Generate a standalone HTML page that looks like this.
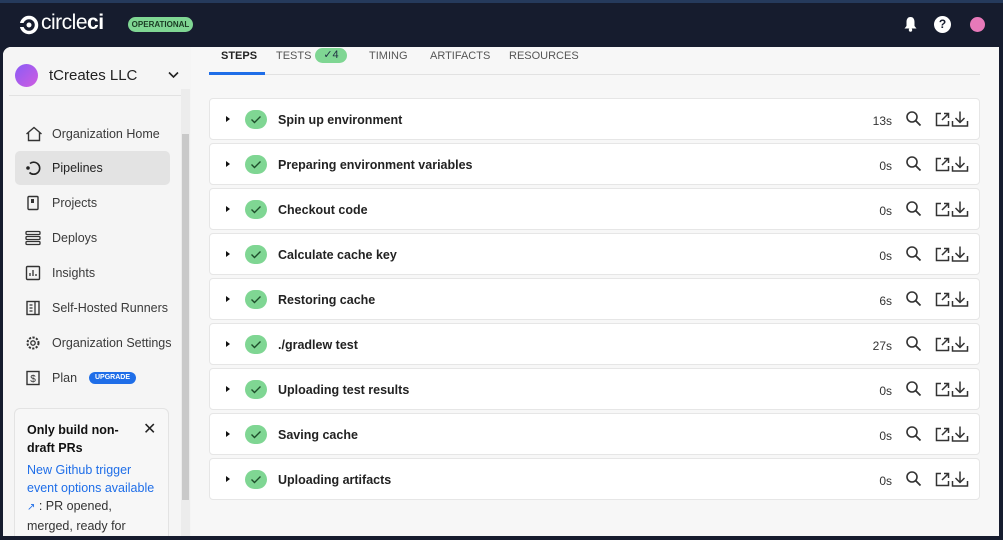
<html><head><style>
*{box-sizing:border-box;margin:0;padding:0}
body{width:1003px;height:540px;overflow:hidden;background:#161c2e;font-family:"Liberation Sans",sans-serif;position:relative}
.top{position:absolute;left:0;top:0;width:1003px;height:3px;background:#253a5c}
.panel{position:absolute;left:3px;top:47px;width:996px;height:489px;background:#f7f7f7;border-radius:8px 0 0 0;overflow:hidden}
.side{position:absolute;left:0;top:0;width:188px;height:489px;background:#f5f5f5}
.sb{position:absolute;left:178px;top:42px;width:9px;height:447px;background:#ececec}
.sb div{position:absolute;left:1px;top:45px;width:7px;height:366px;background:#c9c9c9}
.nav{position:absolute;left:12px;width:155px;height:34px;font-size:12.5px;color:#3a3a3a;display:flex;align-items:center;white-space:nowrap}
.nav svg{position:absolute;left:10px}
.nav span{position:absolute;left:37px}
.row{position:absolute;left:206px;width:771px;height:42px;background:#fff;border:1px solid #e6e6e6;border-radius:4px}
.row .tri{position:absolute;left:16px;top:17px;width:0;height:0;border-left:4px solid #111;border-top:3.5px solid transparent;border-bottom:3.5px solid transparent}
.row .ok{position:absolute;left:35px;top:11px;width:22px;height:19px;border-radius:10px;background:#7fd693}
.row .nm{position:absolute;left:68px;top:14px;font-size:12.5px;font-weight:bold;color:#222}
.row .t{position:absolute;right:87px;top:15px;font-size:12px;color:#333}
.row svg.i{position:absolute;top:11px}
</style></head><body>
<div class="top"></div>
<svg style="position:absolute;left:19px;top:15px" width="20" height="20" viewBox="0 0 20 20"><circle cx="10" cy="10" r="7.5" fill="none" stroke="#fff" stroke-width="3.5"/><circle cx="10" cy="10" r="2.5" fill="#fff"/><rect x="0" y="8" width="5" height="4" fill="#161c2e"/></svg>
<div style="position:absolute;left:41px;top:11px;color:#fff;font-size:21px;letter-spacing:-0.5px">circle<b>ci</b></div>
<div style="position:absolute;left:128px;top:17px;width:65px;height:15px;border-radius:8px;background:#7fd693;color:#1a3a23;font-size:8px;font-weight:bold;text-align:center;line-height:15px">OPERATIONAL</div>
<svg style="position:absolute;left:903px;top:16px" width="15" height="16" viewBox="0 0 15 16"><path d="M7.5 1C4.5 1 3.5 3.5 3.5 6V10L1.5 12.5H13.5L11.5 10V6C11.5 3.5 10.5 1 7.5 1Z" fill="#fff"/><circle cx="7.5" cy="14" r="1.7" fill="#fff"/></svg>
<div style="position:absolute;left:934px;top:16px;width:17px;height:17px;border-radius:50%;background:#fff;color:#161c2e;font-size:12px;font-weight:bold;text-align:center;line-height:17px">?</div>
<div style="position:absolute;left:970px;top:17px;width:15px;height:15px;border-radius:50%;background:#e779b9"></div>
<div class="panel">
<div class="side">
<div style="position:absolute;left:12px;top:17px;width:23px;height:23px;border-radius:50%;background:linear-gradient(135deg,#8a5cf6,#d05ce0)"></div>
<div style="position:absolute;left:46px;top:20px;font-size:15px;color:#222">tCreates LLC</div>
<svg style="position:absolute;left:165px;top:24px" width="11" height="8"><path d="M1 1.5L5.5 6L10 1.5" fill="none" stroke="#222" stroke-width="1.6"/></svg>
<div style="position:absolute;left:6px;top:48px;width:180px;height:1px;background:#e2e2e2"></div>
<div class="nav" style="top:70px"><svg width="18" height="16"><path d="M1.5 8L9 1.5L16.5 8M3.5 6.5V14.5H14.5V6.5" fill="none" stroke="#333" stroke-width="1.4"/></svg><span>Organization Home</span></div>
<div class="nav" style="top:104px;background:#e3e3e3;border-radius:5px;color:#222"><svg width="16" height="16"><path d="M5 3.5A6 6 0 1 1 4.5 12.5" fill="none" stroke="#222" stroke-width="1.6"/><circle cx="3" cy="8" r="1.8" fill="#222"/></svg><span>Pipelines</span></div>
<div class="nav" style="top:139px"><svg width="16" height="16"><rect x="3" y="1.5" width="10" height="13" rx="1" fill="none" stroke="#333" stroke-width="1.4"/><rect x="6" y="4" width="3" height="4" fill="#333"/></svg><span>Projects</span></div>
<div class="nav" style="top:174px"><svg width="16" height="16"><rect x="1" y="1.5" width="14" height="3" rx="1" fill="none" stroke="#333" stroke-width="1.3"/><rect x="1" y="6.5" width="14" height="3" rx="1" fill="none" stroke="#333" stroke-width="1.3"/><rect x="1" y="11.5" width="14" height="3" rx="1" fill="none" stroke="#333" stroke-width="1.3"/></svg><span>Deploys</span></div>
<div class="nav" style="top:209px"><svg width="16" height="16"><rect x="1.5" y="1.5" width="13" height="13" rx="1" fill="none" stroke="#333" stroke-width="1.4"/><path d="M5 11V8M8 11V5M11 11V9" stroke="#333" stroke-width="1.3"/></svg><span>Insights</span></div>
<div class="nav" style="top:244px"><svg width="16" height="16"><rect x="2" y="1.5" width="12" height="13" fill="none" stroke="#333" stroke-width="1.4"/><path d="M10 1.5V14.5M4.5 5H7.5M4.5 8H7.5M4.5 11H7.5" stroke="#333" stroke-width="1.3"/></svg><span>Self-Hosted Runners</span></div>
<div class="nav" style="top:279px"><svg width="16" height="16"><circle cx="8" cy="8" r="5.5" fill="none" stroke="#333" stroke-width="2" stroke-dasharray="2.2 1.4"/><circle cx="8" cy="8" r="2.2" fill="none" stroke="#333" stroke-width="1.3"/></svg><span>Organization Settings</span></div>
<div class="nav" style="top:314px"><svg width="16" height="16"><rect x="2" y="1.5" width="12" height="13" fill="none" stroke="#333" stroke-width="1.4"/><text x="8" y="12" font-size="10" text-anchor="middle" fill="#333" font-family="Liberation Sans">$</text></svg><span>Plan</span><div style="position:absolute;left:74px;top:11px;width:47px;height:12px;border-radius:6px;background:#1f6ee8;color:#fff;font-size:7px;font-weight:bold;text-align:center;line-height:12px">UPGRADE</div></div>
<div style="position:absolute;left:11px;top:361px;width:155px;height:140px;border:1px solid #e3e3e3;border-radius:6px;background:#f7f7f7">
<div style="position:absolute;left:12px;top:12px;font-size:12.5px;font-weight:bold;color:#111;line-height:18px;width:100px">Only build non-draft PRs</div>
<div style="position:absolute;left:128px;top:10px;font-size:16px;color:#222">✕</div>
<div style="position:absolute;left:12px;top:52px;font-size:12.5px;line-height:18px;color:#333;width:132px"><span style="color:#1f6ee8">New Github trigger event options available</span><br><span style="color:#1f6ee8;font-size:10px">↗</span> : PR opened, merged, ready for</div>
</div>
<div class="sb"><div></div></div>
</div>
<div style="position:absolute;left:206px;top:27px;width:771px;height:1px;background:#e2e2e2"></div>
<div style="position:absolute;left:206px;top:25px;width:56px;height:3px;background:#1f6ee8"></div>
<div style="position:absolute;left:218px;top:3px;font-size:11px;font-weight:bold;color:#222">STEPS</div>
<div style="position:absolute;left:273px;top:3px;font-size:11px;color:#555">TESTS</div>
<div style="position:absolute;left:312px;top:1px;width:32px;height:15px;border-radius:8px;background:#7fd693;font-size:11px;color:#234;text-align:center;line-height:15px">✓4</div>
<div style="position:absolute;left:366px;top:3px;font-size:11px;color:#555">TIMING</div>
<div style="position:absolute;left:427px;top:3px;font-size:11px;color:#555">ARTIFACTS</div>
<div style="position:absolute;left:506px;top:3px;font-size:11px;color:#555">RESOURCES</div>
</div>
<div id="rows"></div>
<script>
var d=[["Spin up environment","13s"],["Preparing environment variables","0s"],["Checkout code","0s"],["Calculate cache key","0s"],["Restoring cache","6s"],["./gradlew test","27s"],["Uploading test results","0s"],["Saving cache","0s"],["Uploading artifacts","0s"]];
var h="";d.forEach(function(r,i){h+='<div class="row" style="top:'+(98+i*45)+'px;left:209px"><div class="tri"></div><div class="ok"><svg width="22" height="19"><path d="M6.5 9.5L9.5 12.5L15.5 6.5" fill="none" stroke="#1e4d2b" stroke-width="1.4"/></svg></div><div class="nm">'+r[0]+'</div><div class="t">'+r[1]+'</div>'+
'<svg class="i" style="left:695px" width="18" height="18"><circle cx="7" cy="7" r="5" fill="none" stroke="#333" stroke-width="1.6"/><path d="M10.5 10.5L15.5 15.5" stroke="#333" stroke-width="1.8"/></svg>'+
'<svg class="i" style="left:724px" width="18" height="18"><path d="M7 3.5H2.5V15.5H14.5V11" fill="none" stroke="#333" stroke-width="1.5"/><path d="M8 10L14 4M10 3.5H14.5V8" fill="none" stroke="#333" stroke-width="1.5"/></svg>'+
'<svg class="i" style="left:741px" width="18" height="18"><path d="M9 1.5V12M4.5 8L9 12.5L13.5 8M1.5 11V16H16.5V11" fill="none" stroke="#333" stroke-width="1.5"/></svg></div>'});
document.getElementById("rows").innerHTML=h;
</script>
</body></html>
